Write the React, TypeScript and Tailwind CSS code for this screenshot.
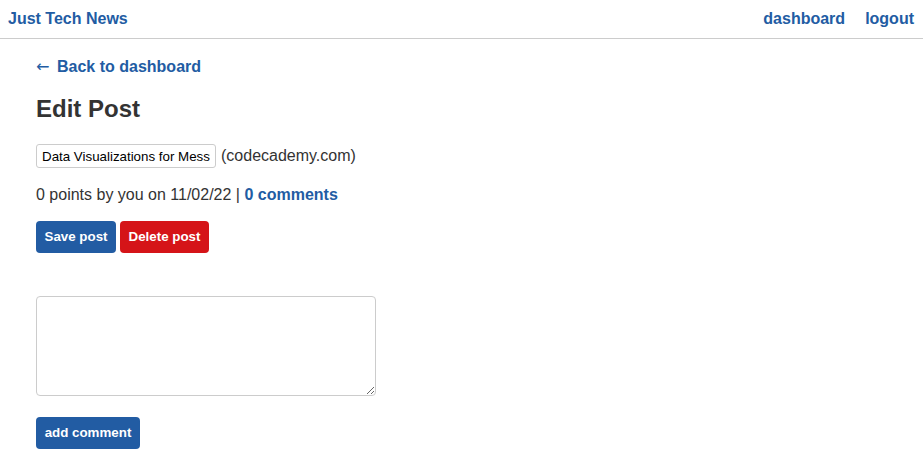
export default function App() {
  return (
    <div className="min-h-screen bg-white font-['Liberation_Sans',Arial,sans-serif] text-[#333]">
      <header className="flex h-[39px] items-center justify-between border-b border-[#ccc] px-2">
        <a href="#" className="text-base font-bold text-[#225ca3]">
          Just Tech News
        </a>
        <nav className="flex gap-5 pr-[1px]">
          <a href="#" className="text-base font-bold text-[#225ca3]">
            dashboard
          </a>
          <a href="#" className="text-base font-bold text-[#225ca3]">
            logout
          </a>
        </nav>
      </header>

      <main className="px-9">
        <a href="#" className="mt-[19px] flex items-center gap-[5px] text-base leading-[18px] font-bold text-[#225ca3]">
          <span className="w-4 font-['DejaVu_Sans',sans-serif] font-normal">←</span>
          Back to dashboard
        </a>
        <h2 className="mt-[19px] text-2xl leading-[28px] font-bold">Edit Post</h2>

        <div className="mt-[21px] flex items-center gap-[5px]">
          <input
            defaultValue="Data Visualizations for Messy Data"
            className="h-6 w-[180px] rounded-[3px] border border-[#ccc] px-[5px] text-[13.33px] text-black outline-none"
          />
          <span className="text-base">(codecademy.com)</span>
        </div>

        <p className="mt-[18px] text-base leading-[18px]">
          0 points by you on 11/02/22 |{" "}
          <a href="#" className="font-bold text-[#225ca3]">
            0 comments
          </a>
        </p>

        <div className="mt-[17px] flex gap-1">
          <button className="h-8 w-20 rounded-[4px] bg-[#225ca3] text-[13.33px] font-bold text-white">
            Save post
          </button>
          <button className="h-8 w-[89px] rounded-[4px] bg-[#d51418] text-[13.33px] font-bold text-white">
            Delete post
          </button>
        </div>

        <textarea className="mt-[43px] block h-[100px] w-[340px] rounded-[4px] border border-[#ccc] outline-none" />

        <button className="mt-[21px] h-8 w-[104px] rounded-[4px] bg-[#225ca3] text-[13.33px] font-bold text-white">
          add comment
        </button>
      </main>
    </div>
  );
}
